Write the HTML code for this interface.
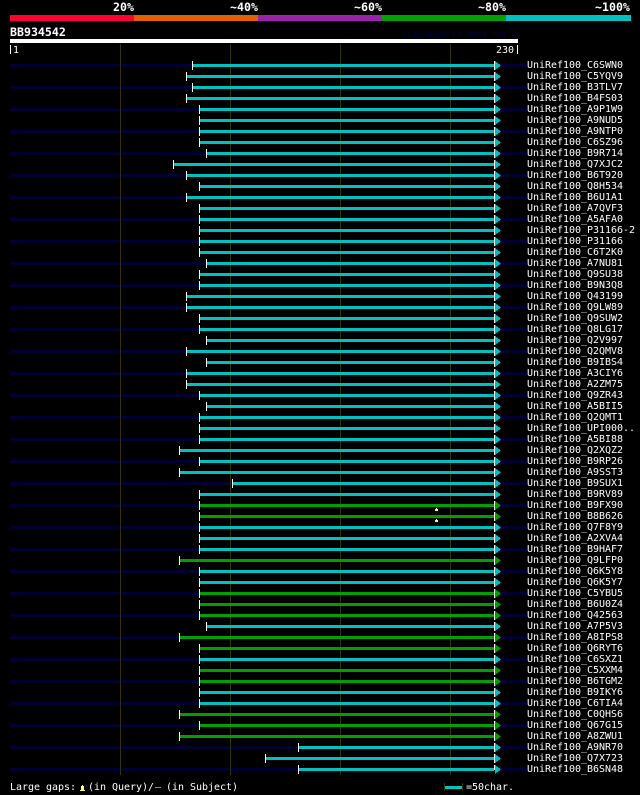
<!DOCTYPE html>
<html><head><meta charset="utf-8"><title>BB934542</title>
<style>
html,body{margin:0;padding:0;background:#000;width:640px;height:795px;overflow:hidden}
svg{display:block}
text{font-family:"DejaVu Sans Mono","Liberation Mono",monospace;font-size:10px;letter-spacing:-0.02px;fill:#fff}
.b{font-weight:bold;font-size:11.6px;letter-spacing:0}
</style></head><body>
<svg width="640" height="795" viewBox="0 0 640 795" xmlns="http://www.w3.org/2000/svg" shape-rendering="crispEdges">
<rect x="0" y="0" width="640" height="795" fill="#000"/>
<rect x="10" y="15" width="124" height="6" fill="#ff0033"/>
<rect x="134" y="15" width="124" height="6" fill="#e06000"/>
<rect x="258" y="15" width="124" height="6" fill="#9922aa"/>
<rect x="382" y="15" width="124" height="6" fill="#00a000"/>
<rect x="506" y="15" width="125" height="6" fill="#00c0c0"/>
<text class="b" x="113" y="11">20%</text>
<text class="b" x="230" y="11">~40%</text>
<text class="b" x="354" y="11">~60%</text>
<text class="b" x="478" y="11">~80%</text>
<text class="b" x="595" y="11">~100%</text>
<text class="b" x="10" y="36">BB934542</text>
<text x="402" y="37" style="font-size:8.3px;letter-spacing:0;font-weight:bold;fill:#000033">AlignView.pm Beta rel.7</text>
<rect x="10" y="39" width="508" height="4" fill="#fff"/>
<rect x="10" y="45" width="1" height="9" fill="#fff"/>
<rect x="517" y="45" width="1" height="9" fill="#fff"/>
<text x="13" y="53">1</text>
<text x="496" y="53">230</text>
<path fill="#000033" d="M10 64H527v3H10zM10 86H527v3H10zM10 108H527v3H10zM10 130H527v3H10zM10 152H527v3H10zM10 174H527v3H10zM10 196H527v3H10zM10 218H527v3H10zM10 240H527v3H10zM10 262H527v3H10zM10 284H527v3H10zM10 306H527v3H10zM10 328H527v3H10zM10 350H527v3H10zM10 372H527v3H10zM10 394H527v3H10zM10 416H527v3H10zM10 438H527v3H10zM10 460H527v3H10zM10 482H527v3H10zM10 504H527v3H10zM10 526H527v3H10zM10 548H527v3H10zM10 570H527v3H10zM10 592H527v3H10zM10 614H527v3H10zM10 636H527v3H10zM10 658H527v3H10zM10 680H527v3H10zM10 702H527v3H10zM10 724H527v3H10zM10 746H527v3H10zM10 768H527v3H10z"/>
<path fill="#333300" d="M120 44h1V775h-1zM230 44h1V775h-1zM340 44h1V775h-1zM450 44h1V775h-1z"/>
<path fill="#00c0c0" d="M193 64H494v3H193zM187 75H494v3H187zM193 86H494v3H193zM187 97H494v3H187zM200 108H494v3H200zM200 119H494v3H200zM200 130H494v3H200zM200 141H494v3H200zM207 152H494v3H207zM174 163H494v3H174zM187 174H494v3H187zM200 185H494v3H200zM187 196H494v3H187zM200 207H494v3H200zM200 218H494v3H200zM200 229H494v3H200zM200 240H494v3H200zM200 251H494v3H200zM207 262H494v3H207zM200 273H494v3H200zM200 284H494v3H200zM187 295H494v3H187zM187 306H494v3H187zM200 317H494v3H200zM200 328H494v3H200zM207 339H494v3H207zM187 350H494v3H187zM207 361H494v3H207zM187 372H494v3H187zM187 383H494v3H187zM200 394H494v3H200zM207 405H494v3H207zM200 416H494v3H200zM200 427H494v3H200zM200 438H494v3H200zM180 449H494v3H180zM200 460H494v3H200zM180 471H494v3H180zM233 482H494v3H233zM200 493H494v3H200zM200 526H494v3H200zM200 537H494v3H200zM200 548H494v3H200zM200 570H494v3H200zM200 581H494v3H200zM207 625H494v3H207zM200 658H494v3H200zM200 691H494v3H200zM200 702H494v3H200zM299 746H494v3H299zM266 757H494v3H266zM299 768H494v3H299z"/>
<path fill="#00a000" d="M200 504H494v3H200zM200 515H494v3H200zM180 559H494v3H180zM200 592H494v3H200zM200 603H494v3H200zM200 614H494v3H200zM180 636H494v3H180zM200 647H494v3H200zM200 669H494v3H200zM200 680H494v3H200zM180 713H494v3H180zM200 724H494v3H200zM180 735H494v3H180z"/>
<path fill="#fff" d="M192 61h1v9h-1zM186 72h1v9h-1zM192 83h1v9h-1zM186 94h1v9h-1zM199 105h1v9h-1zM199 116h1v9h-1zM199 127h1v9h-1zM199 138h1v9h-1zM206 149h1v9h-1zM173 160h1v9h-1zM186 171h1v9h-1zM199 182h1v9h-1zM186 193h1v9h-1zM199 204h1v9h-1zM199 215h1v9h-1zM199 226h1v9h-1zM199 237h1v9h-1zM199 248h1v9h-1zM206 259h1v9h-1zM199 270h1v9h-1zM199 281h1v9h-1zM186 292h1v9h-1zM186 303h1v9h-1zM199 314h1v9h-1zM199 325h1v9h-1zM206 336h1v9h-1zM186 347h1v9h-1zM206 358h1v9h-1zM186 369h1v9h-1zM186 380h1v9h-1zM199 391h1v9h-1zM206 402h1v9h-1zM199 413h1v9h-1zM199 424h1v9h-1zM199 435h1v9h-1zM179 446h1v9h-1zM199 457h1v9h-1zM179 468h1v9h-1zM232 479h1v9h-1zM199 490h1v9h-1zM199 501h1v9h-1zM199 512h1v9h-1zM199 523h1v9h-1zM199 534h1v9h-1zM199 545h1v9h-1zM179 556h1v9h-1zM199 567h1v9h-1zM199 578h1v9h-1zM199 589h1v9h-1zM199 600h1v9h-1zM199 611h1v9h-1zM206 622h1v9h-1zM179 633h1v9h-1zM199 644h1v9h-1zM199 655h1v9h-1zM199 666h1v9h-1zM199 677h1v9h-1zM199 688h1v9h-1zM199 699h1v9h-1zM179 710h1v9h-1zM199 721h1v9h-1zM179 732h1v9h-1zM298 743h1v9h-1zM265 754h1v9h-1zM298 765h1v9h-1z"/>
<path fill="none" stroke="#fff" stroke-width="1" stroke-dasharray="9 2" d="M494.5 61V770"/>
<path fill="#00c0c0" d="M495 61l6 4.5-6 4.5zM495 72l6 4.5-6 4.5zM495 83l6 4.5-6 4.5zM495 94l6 4.5-6 4.5zM495 105l6 4.5-6 4.5zM495 116l6 4.5-6 4.5zM495 127l6 4.5-6 4.5zM495 138l6 4.5-6 4.5zM495 149l6 4.5-6 4.5zM495 160l6 4.5-6 4.5zM495 171l6 4.5-6 4.5zM495 182l6 4.5-6 4.5zM495 193l6 4.5-6 4.5zM495 204l6 4.5-6 4.5zM495 215l6 4.5-6 4.5zM495 226l6 4.5-6 4.5zM495 237l6 4.5-6 4.5zM495 248l6 4.5-6 4.5zM495 259l6 4.5-6 4.5zM495 270l6 4.5-6 4.5zM495 281l6 4.5-6 4.5zM495 292l6 4.5-6 4.5zM495 303l6 4.5-6 4.5zM495 314l6 4.5-6 4.5zM495 325l6 4.5-6 4.5zM495 336l6 4.5-6 4.5zM495 347l6 4.5-6 4.5zM495 358l6 4.5-6 4.5zM495 369l6 4.5-6 4.5zM495 380l6 4.5-6 4.5zM495 391l6 4.5-6 4.5zM495 402l6 4.5-6 4.5zM495 413l6 4.5-6 4.5zM495 424l6 4.5-6 4.5zM495 435l6 4.5-6 4.5zM495 446l6 4.5-6 4.5zM495 457l6 4.5-6 4.5zM495 468l6 4.5-6 4.5zM495 479l6 4.5-6 4.5zM495 490l6 4.5-6 4.5zM495 523l6 4.5-6 4.5zM495 534l6 4.5-6 4.5zM495 545l6 4.5-6 4.5zM495 567l6 4.5-6 4.5zM495 578l6 4.5-6 4.5zM495 622l6 4.5-6 4.5zM495 655l6 4.5-6 4.5zM495 688l6 4.5-6 4.5zM495 699l6 4.5-6 4.5zM495 743l6 4.5-6 4.5zM495 754l6 4.5-6 4.5zM495 765l6 4.5-6 4.5z"/>
<path fill="#00a000" d="M495 501l6 4.5-6 4.5zM495 512l6 4.5-6 4.5zM495 556l6 4.5-6 4.5zM495 589l6 4.5-6 4.5zM495 600l6 4.5-6 4.5zM495 611l6 4.5-6 4.5zM495 633l6 4.5-6 4.5zM495 644l6 4.5-6 4.5zM495 666l6 4.5-6 4.5zM495 677l6 4.5-6 4.5zM495 710l6 4.5-6 4.5zM495 721l6 4.5-6 4.5zM495 732l6 4.5-6 4.5z"/>
<path fill="#ffff66" d="M436 508h1v1h1v2h-3v-2h1zM436 519h1v1h1v2h-3v-2h1z"/>
<g>
<text x="527" y="68">UniRef100_C6SWN0</text>
<text x="527" y="79">UniRef100_C5YQV9</text>
<text x="527" y="90">UniRef100_B3TLV7</text>
<text x="527" y="101">UniRef100_B4FS03</text>
<text x="527" y="112">UniRef100_A9P1W9</text>
<text x="527" y="123">UniRef100_A9NUD5</text>
<text x="527" y="134">UniRef100_A9NTP0</text>
<text x="527" y="145">UniRef100_C6SZ96</text>
<text x="527" y="156">UniRef100_B9R714</text>
<text x="527" y="167">UniRef100_Q7XJC2</text>
<text x="527" y="178">UniRef100_B6T920</text>
<text x="527" y="189">UniRef100_Q8H534</text>
<text x="527" y="200">UniRef100_B6U1A1</text>
<text x="527" y="211">UniRef100_A7QVF3</text>
<text x="527" y="222">UniRef100_A5AFA0</text>
<text x="527" y="233">UniRef100_P31166-2</text>
<text x="527" y="244">UniRef100_P31166</text>
<text x="527" y="255">UniRef100_C6T2K0</text>
<text x="527" y="266">UniRef100_A7NU81</text>
<text x="527" y="277">UniRef100_Q9SU38</text>
<text x="527" y="288">UniRef100_B9N3Q8</text>
<text x="527" y="299">UniRef100_Q43199</text>
<text x="527" y="310">UniRef100_Q9LW89</text>
<text x="527" y="321">UniRef100_Q9SUW2</text>
<text x="527" y="332">UniRef100_Q8LG17</text>
<text x="527" y="343">UniRef100_Q2V997</text>
<text x="527" y="354">UniRef100_Q2QMV8</text>
<text x="527" y="365">UniRef100_B9IBS4</text>
<text x="527" y="376">UniRef100_A3CIY6</text>
<text x="527" y="387">UniRef100_A2ZM75</text>
<text x="527" y="398">UniRef100_Q9ZR43</text>
<text x="527" y="409">UniRef100_A5BII5</text>
<text x="527" y="420">UniRef100_Q2QMT1</text>
<text x="527" y="431">UniRef100_UPI000..</text>
<text x="527" y="442">UniRef100_A5BI88</text>
<text x="527" y="453">UniRef100_Q2XQZ2</text>
<text x="527" y="464">UniRef100_B9RP26</text>
<text x="527" y="475">UniRef100_A9SST3</text>
<text x="527" y="486">UniRef100_B9SUX1</text>
<text x="527" y="497">UniRef100_B9RV89</text>
<text x="527" y="508">UniRef100_B9FX90</text>
<text x="527" y="519">UniRef100_B8B626</text>
<text x="527" y="530">UniRef100_Q7F8Y9</text>
<text x="527" y="541">UniRef100_A2XVA4</text>
<text x="527" y="552">UniRef100_B9HAF7</text>
<text x="527" y="563">UniRef100_Q9LFP0</text>
<text x="527" y="574">UniRef100_Q6K5Y8</text>
<text x="527" y="585">UniRef100_Q6K5Y7</text>
<text x="527" y="596">UniRef100_C5YBU5</text>
<text x="527" y="607">UniRef100_B6U0Z4</text>
<text x="527" y="618">UniRef100_Q42563</text>
<text x="527" y="629">UniRef100_A7P5V3</text>
<text x="527" y="640">UniRef100_A8IPS8</text>
<text x="527" y="651">UniRef100_Q6RYT6</text>
<text x="527" y="662">UniRef100_C6SXZ1</text>
<text x="527" y="673">UniRef100_C5XXM4</text>
<text x="527" y="684">UniRef100_B6TGM2</text>
<text x="527" y="695">UniRef100_B9IKY6</text>
<text x="527" y="706">UniRef100_C6TIA4</text>
<text x="527" y="717">UniRef100_C0QHS6</text>
<text x="527" y="728">UniRef100_Q67G15</text>
<text x="527" y="739">UniRef100_A8ZWU1</text>
<text x="527" y="750">UniRef100_A9NR70</text>
<text x="527" y="761">UniRef100_Q7X723</text>
<text x="527" y="772">UniRef100_B6SN48</text>
</g>
<text x="10" y="790">Large gaps:</text>
<path fill="#ffff66" d="M82 785h1v1h1v4h1v1h-5v-1h1v-4h1z"/>
<text x="88" y="790">(in Query)/</text>
<rect x="155" y="787" width="6" height="1" fill="#00c0c0"/>
<text x="166" y="790">(in Subject)</text>
<rect x="444" y="783" width="1" height="8" fill="#333300"/>
<rect x="462" y="783" width="1" height="8" fill="#333300"/>
<rect x="445" y="786" width="17" height="3" fill="#00c0c0"/>
<text x="466" y="790">=50char.</text>
</svg>
</body></html>
